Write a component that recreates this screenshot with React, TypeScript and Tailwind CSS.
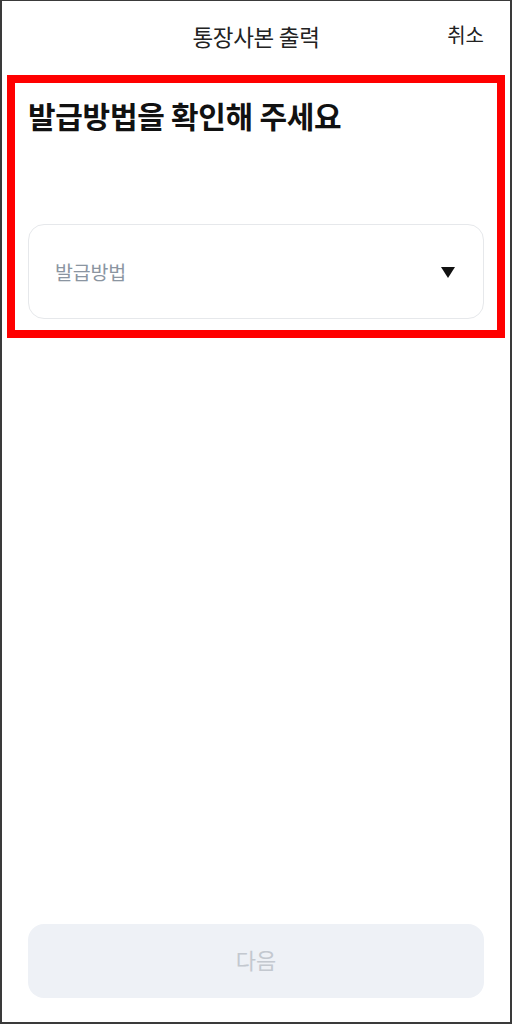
import React from "react";

export default function App() {
  return (
    <div
      className="w-[512px] h-[1024px] bg-white flex flex-col border-x-2 border-b-2 border-t border-[#3a3a3a] overflow-hidden"
      style={{ fontFamily: '"Noto Sans CJK KR", "Noto Sans", sans-serif' }}
    >
      <header className="relative h-[74px] shrink-0 flex items-center justify-center">
        <h1 className="text-[22.5px] leading-none text-[#222] tracking-[-0.3px] -mt-[3px]">통장사본 출력</h1>
        <button className="absolute right-[26px] top-[23px] text-[20px] leading-[22px] text-[#222]">취소</button>
      </header>
      <section className="mx-[5px] border-[8px] border-[#ff0000] px-[13px] pt-[13px] pb-[11px]">
        <h2 className="text-[30px] leading-[38px] font-bold text-[#111] tracking-[-0.3px]">발급방법을 확인해 주세요</h2>
        <div className="mt-[90px] h-[95px] rounded-[16px] border border-[#e6e8eb] flex items-center justify-between pl-[26px] pr-[28px]">
          <span className="text-[19.5px] text-[#8b95a1] tracking-[-0.2px]">발급방법</span>
          <svg width="14" height="11" viewBox="0 0 14 11" className="mt-[1px]">
            <polygon points="0,0 14,0 7,11" fill="#111" />
          </svg>
        </div>
      </section>
      <div className="flex-1" />
      <div className="px-[26px] pb-[24px]">
        <button className="w-full h-[74px] rounded-[16px] bg-[#eef1f6] text-[22px] text-[#c3c8cf] flex items-center justify-center">
          <span className="-mt-[3px]">다음</span>
        </button>
      </div>
    </div>
  );
}
